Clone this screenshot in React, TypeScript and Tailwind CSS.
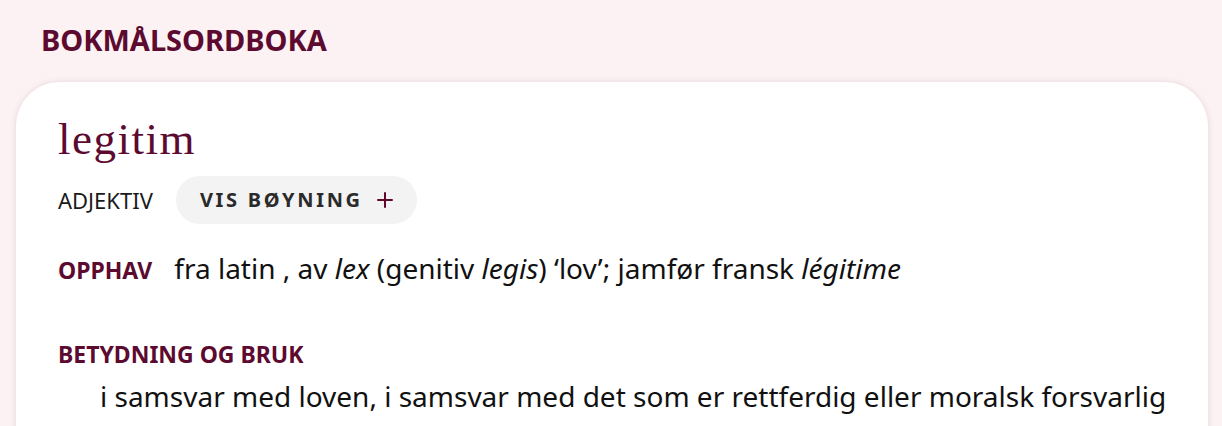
import { Plus } from "lucide-react";

export default function App() {
    return (
        <div className="min-h-[426px] bg-[#fcf2f3] font-['Noto_Sans',sans-serif] overflow-hidden">
            <header className="px-[41px] pt-[20px] pb-[22px]">
                <h1 className="text-[29px] font-bold leading-[40px] text-[#5c0a2f]">BOKMÅLSORDBOKA</h1>
            </header>

            <main className="ml-[16px] mr-[14px] bg-white rounded-[44px] shadow-[0_0_6px_rgba(90,10,40,0.12)] pl-[42px] pr-[40px] pt-[31px] pb-[60px]">
                <h2 className="font-['Liberation_Serif',serif] text-[45px] leading-[52px] tracking-[1.5px] text-[#5c0a2f]">legitim</h2>

                <div className="flex items-center gap-[23px] mt-[11px]">
                    <span className="text-[22px] text-[#1a1a1a]">ADJEKTIV</span>
                    <button className="flex items-center gap-[10px] h-[48px] rounded-full bg-[#f3f3f3] pl-[24px] pr-[20px]">
                        <span className="text-[20px] font-bold tracking-[2.7px] text-[#2a2a2a]">VIS BØYNING</span>
                        <Plus size={24} strokeWidth={2} className="text-[#5c0a2f]" />
                    </button>
                </div>

                <div className="flex items-baseline gap-[22px] mt-[25px]">
                    <span className="text-[23px] font-bold text-[#5c0a2f]">OPPHAV</span>
                    <span className="text-[28px] leading-[38px] text-[#111]">
                        fra latin , av <i>lex</i> (genitiv <i>legis</i>) ‘lov’; jamfør fransk <i>légitime</i>
                    </span>
                </div>

                <h3 className="mt-[50px] text-[23px] leading-[32px] font-bold text-[#5c0a2f]">BETYDNING OG BRUK</h3>
                <p className="mt-[7px] pl-[42px] text-[28px] leading-[38px] text-[#111]">
                    i samsvar med loven, i samsvar med det som er rettferdig eller moralsk forsvarlig
                </p>
            </main>
        </div>
    );
}
